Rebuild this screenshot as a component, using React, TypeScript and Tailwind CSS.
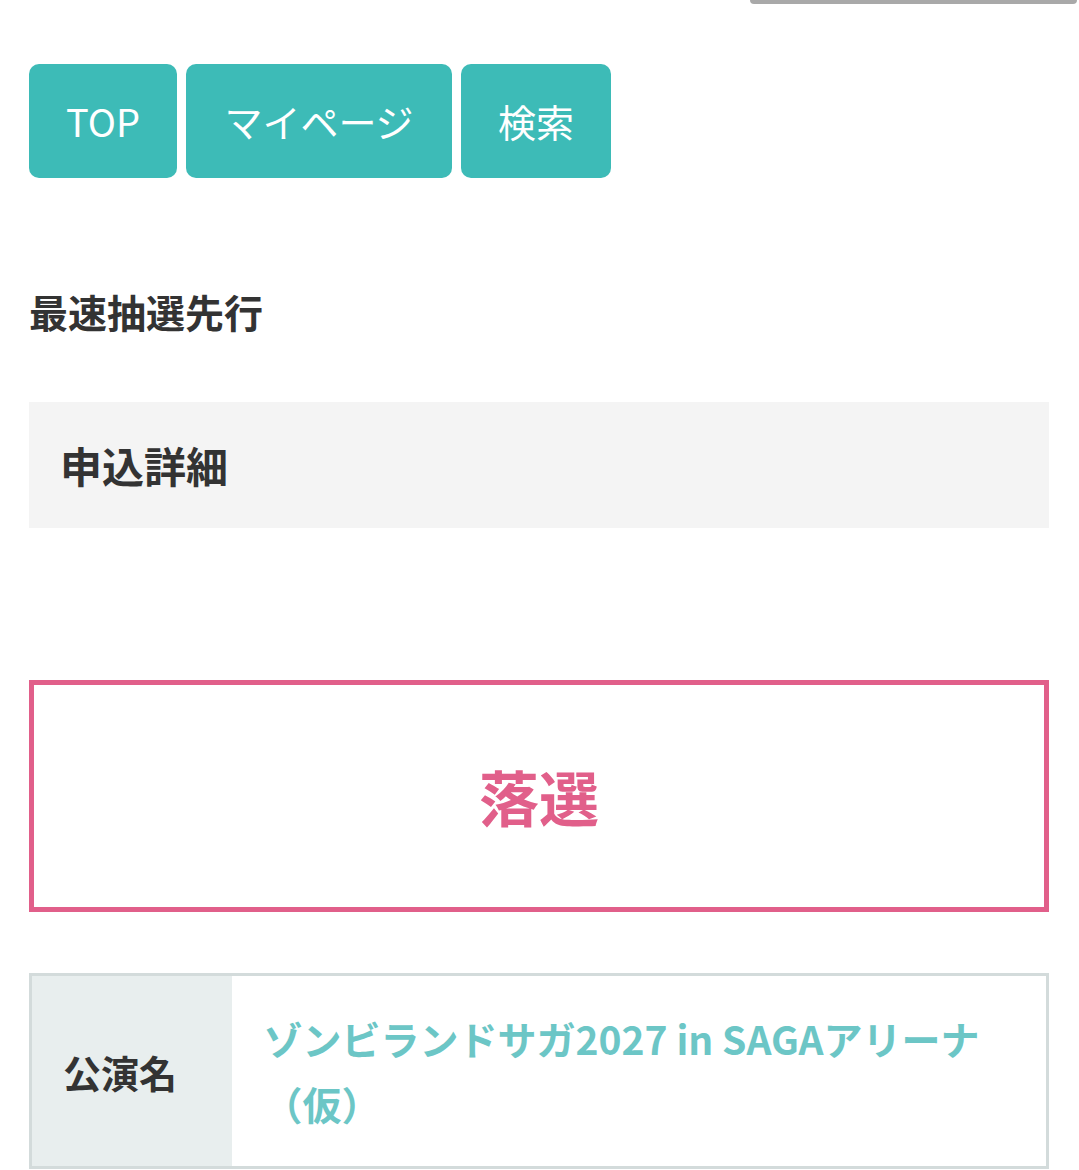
const font = { fontFamily: '"Noto Sans CJK JP", "Noto Sans", sans-serif' };

const navItems = [
  { label: 'TOP', w: 'w-[148px]' },
  { label: 'マイページ', w: 'w-[266px]' },
  { label: '検索', w: 'w-[150px]' },
];

export default function App() {
  return (
    <div className="min-h-screen bg-white text-[#333]" style={font}>
      <div className="flex justify-end pr-[2px]">
        <div className="w-[327px] h-[4px] bg-[#a9a9a9] rounded-b-[4px]"></div>
      </div>

      <div className="pl-[29px] pr-[30px]">
        <nav className="flex gap-[9px] mt-[60px]">
          {navItems.map((item) => (
            <a
              key={item.label}
              className={`${item.w} h-[114px] flex items-center justify-center rounded-[10px] bg-[#3dbbb7] text-white text-[38px] leading-none`}
            >
              {item.label}
            </a>
          ))}
        </nav>

        <h2 className="mt-[106px] text-[39px] font-bold leading-[54px]">最速抽選先行</h2>

        <div className="mt-[64px] h-[126px] bg-[#f4f4f4] flex items-center px-[31px]">
          <h1 className="text-[42px] font-bold leading-none">申込詳細</h1>
        </div>

        <div className="mt-[152px] h-[232px] border-[5px] border-[#e15f8a] flex items-center justify-center">
          <p className="text-[60px] font-bold text-[#e15f8a] leading-none">落選</p>
        </div>

        <table className="mt-[61px] w-full border-[3px] border-[#d3dbdb] border-collapse">
          <tbody>
            <tr>
              <th className="w-[201px] bg-[#e8eeee] text-left align-middle pl-[31px] text-[38px] font-bold">
                公演名
              </th>
              <td className="pl-[32px] pr-[40px] pt-[30px] pb-[30px] text-[39px] font-bold leading-[65px] text-[#6cc6c6]">
                ゾンビランドサガ2027 in SAGAアリーナ（仮）
              </td>
            </tr>
          </tbody>
        </table>
      </div>
    </div>
  );
}
